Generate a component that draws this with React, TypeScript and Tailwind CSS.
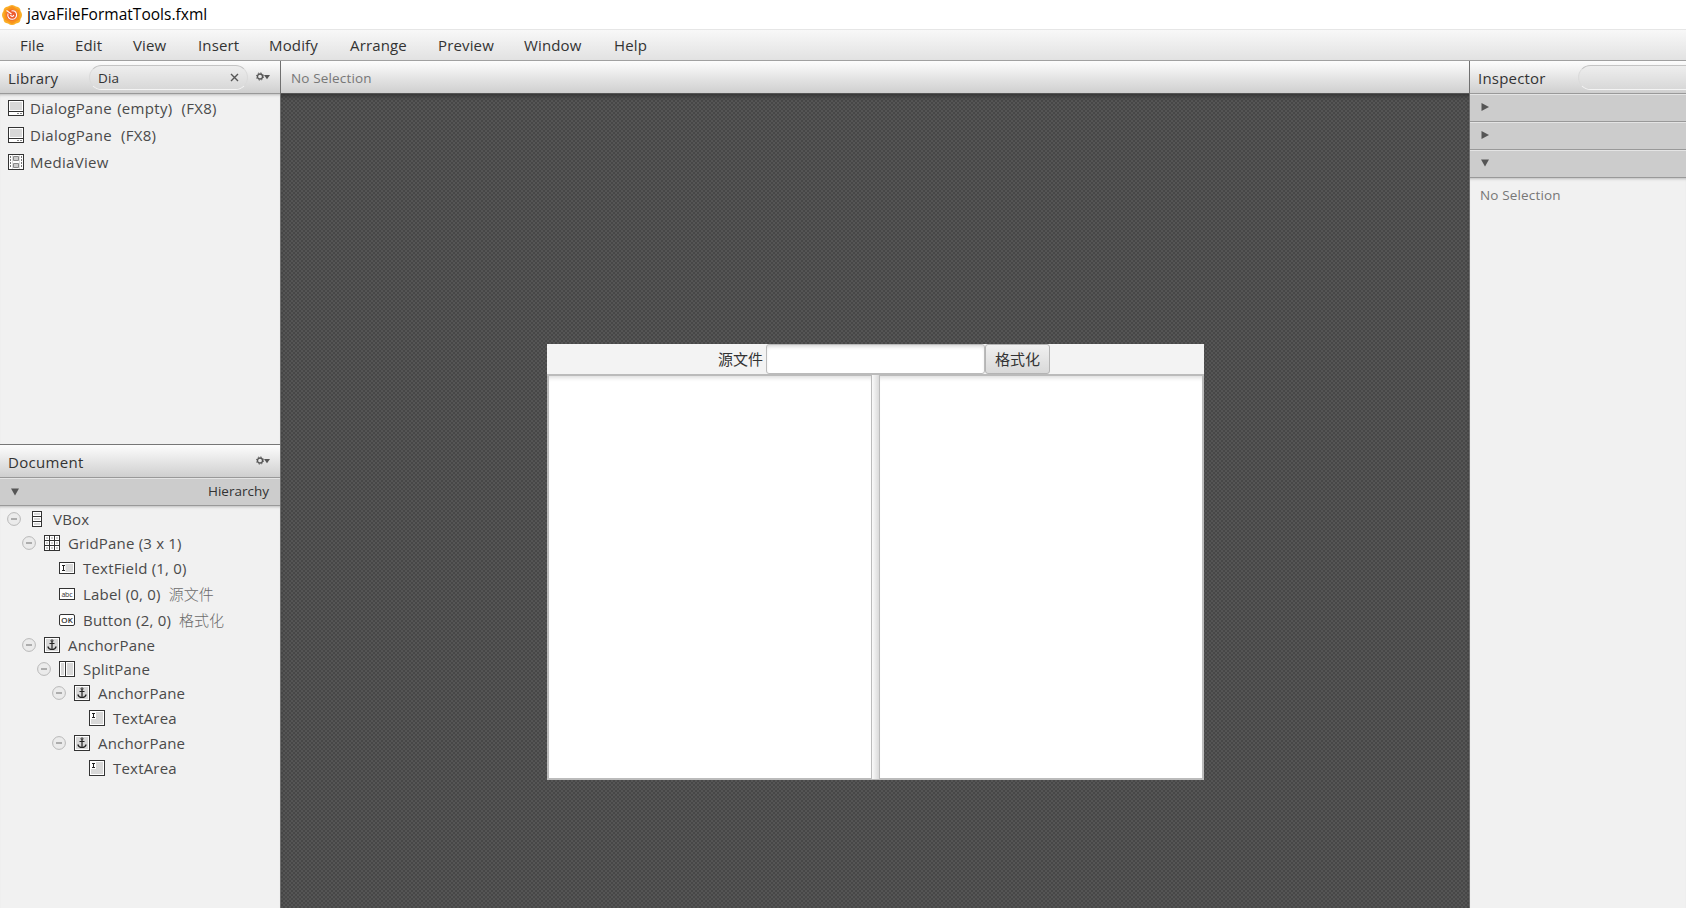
import { Fragment, type ReactNode } from "react";

type IconKind = "dialog" | "media" | "vbox" | "grid" | "field" | "label" | "button" | "anchor" | "split" | "area";

interface TreeNode {
  icon: IconKind;
  name: string;
  info?: string;
  pad: string;
  height: string;
  leaf?: boolean;
}

const menus = [
  { label: "File", width: "w-[55px]" },
  { label: "Edit", width: "w-[58px]" },
  { label: "View", width: "w-[65px]" },
  { label: "Insert", width: "w-[71px]" },
  { label: "Modify", width: "w-[81px]" },
  { label: "Arrange", width: "w-[88px]" },
  { label: "Preview", width: "w-[86px]" },
  { label: "Window", width: "w-[90px]" },
  { label: "Help", width: "w-[60px]" },
];

const library: { icon: IconKind; name: string; tag?: string }[] = [
  { icon: "dialog", name: "DialogPane (empty)", tag: "(FX8)" },
  { icon: "dialog", name: "DialogPane", tag: "(FX8)" },
  { icon: "media", name: "MediaView" },
];

const tree: TreeNode[] = [
  { icon: "vbox", name: "VBox", pad: "pl-[7px]", height: "h-6" },
  { icon: "grid", name: "GridPane (3 x 1)", pad: "pl-[22px]", height: "h-6" },
  { icon: "field", name: "TextField (1, 0)", pad: "pl-[37px]", height: "h-[26px]", leaf: true },
  { icon: "label", name: "Label (0, 0)", info: "源文件", pad: "pl-[37px]", height: "h-[26px]", leaf: true },
  { icon: "button", name: "Button (2, 0)", info: "格式化", pad: "pl-[37px]", height: "h-[26px]", leaf: true },
  { icon: "anchor", name: "AnchorPane", pad: "pl-[22px]", height: "h-6" },
  { icon: "split", name: "SplitPane", pad: "pl-[37px]", height: "h-6" },
  { icon: "anchor", name: "AnchorPane", pad: "pl-[52px]", height: "h-6" },
  { icon: "area", name: "TextArea", pad: "pl-[67px]", height: "h-[26px]", leaf: true },
  { icon: "anchor", name: "AnchorPane", pad: "pl-[52px]", height: "h-6" },
  { icon: "area", name: "TextArea", pad: "pl-[67px]", height: "h-[26px]", leaf: true },
];

const iconShapes: Record<IconKind, ReactNode> = {
  dialog: (
    <>
      <rect x="0.5" y="0.5" width="15" height="15" fill="#fff" stroke="#333" />
      <path d="M2 2h12v8H2z" fill="#d8d8d8" />
      <path d="M1 11.5h14" stroke="#333" />
      <path d="M9 13.5h2M12 13.5h2" stroke="#888" />
    </>
  ),
  media: (
    <>
      <rect x="0.5" y="0.5" width="15" height="15" fill="#fff" stroke="#333" />
      <path d="M2.5 2v12M13.5 2v12" stroke="#777" strokeDasharray="2 1" />
      <path d="M5.5 2.5h5v4h-5zM5.5 9.5h5v4h-5z" fill="#ccc" stroke="#888" />
      <path d="M4.5 1v14M11.5 1v14" stroke="#ddd" />
    </>
  ),
  vbox: (
    <>
      <rect x="3.5" y="0.5" width="9" height="15" fill="#fff" stroke="#333" />
      <path d="M5 2h6v2H5zM5 7h6v2H5zM5 12h6v2H5z" fill="#d8d8d8" />
      <path d="M4 5.5h8M4 10.5h8" stroke="#333" />
    </>
  ),
  grid: (
    <>
      <rect x="0.5" y="0.5" width="15" height="15" fill="#fff" stroke="#333" />
      <path d="M2 2h2v2H2zM7 2h2v2H7zM12 2h2v2h-2zM2 7h2v2H2zM7 7h2v2H7zM12 7h2v2h-2zM2 12h2v2H2zM7 12h2v2H7zM12 12h2v2h-2z" fill="#d0d0d0" />
      <path d="M5.5 1v14M10.5 1v14M1 5.5h14M1 10.5h14" stroke="#333" />
    </>
  ),
  field: (
    <>
      <rect x="0.5" y="2.5" width="15" height="11" fill="#fff" stroke="#333" />
      <path d="M6.5 4H14v8H6.5z" fill="#d8d8d8" />
      <path d="M3 5.5h3M3 10.5h3M4.5 5v6" stroke="#222" fill="none" />
    </>
  ),
  label: (
    <>
      <rect x="0.5" y="2.5" width="15" height="11" fill="#fff" stroke="#333" />
      <text x="2.5" y="10.7" fontSize="7" fill="#333" letterSpacing="0" textLength="11">abc</text>
    </>
  ),
  button: (
    <>
      <rect x="0.5" y="2.5" width="15" height="11" rx="1.5" fill="#fff" stroke="#333" />
      <text x="2.3" y="11" fontSize="8" fill="#222" stroke="#222" strokeWidth="0.2" letterSpacing="0" textLength="11.4">OK</text>
    </>
  ),
  anchor: (
    <>
      <rect x="0.5" y="0.5" width="15" height="15" fill="#fff" stroke="#333" />
      <path d="M2 2h12v12H2z" fill="#d8d8d8" />
      <circle cx="8" cy="3.8" r="1" fill="none" stroke="#222" />
      <path d="M8 5v7.5M5.5 6.5h5" stroke="#222" strokeWidth="1.2" />
      <path d="M3.8 9.5c.6 2 2.1 3 4.2 3s3.6-1 4.2-3" fill="none" stroke="#222" strokeWidth="1.2" />
    </>
  ),
  split: (
    <>
      <rect x="0.5" y="0.5" width="15" height="15" fill="#fff" stroke="#333" />
      <path d="M2 2h3v12H2zM8 2h6v12H8z" fill="#d8d8d8" />
      <path d="M6.5 1v14" stroke="#333" />
    </>
  ),
  area: (
    <>
      <rect x="0.5" y="0.5" width="15" height="15" fill="#fff" stroke="#333" />
      <path d="M7 2h7v12H2V9h5z" fill="#d8d8d8" />
      <path d="M3 3.5h3M3 7.5h3M4.5 3v5" stroke="#222" fill="none" />
    </>
  ),
};

const NodeIcon = ({ kind }: { kind: IconKind }) => (
  <svg width="16" height="16" viewBox="0 0 16 16" className="shrink-0">
    {iconShapes[kind]}
  </svg>
);

const GearMenu = () => (
  <svg width="14" height="10" viewBox="0 0 14 10" className="shrink-0">
    <circle cx="4" cy="4.5" r="2.5" fill="none" stroke="#555" strokeWidth="1.3" />
    <circle cx="4" cy="4.5" r="3.6" fill="none" stroke="#555" strokeDasharray="1.4 1.427" />
    <path d="M8 3h6l-3 4.2z" fill="#555" />
  </svg>
);

const Arrow = ({ open }: { open?: boolean }) => (
  <svg width="8" height="8" viewBox="0 0 8 8" className="shrink-0">
    <path d={open ? "M0 0.5h8L4 7.5z" : "M0.5 0v8L8 4z"} fill="#555" />
  </svg>
);

const AppLogo = () => (
  <svg width="20" height="20" viewBox="0 0 20 20" className="shrink-0">
    <path d="M6 1.500Q10-1.500 14 1.500Q18.500 2 18.500 6Q21.500 10 18.500 14Q18.500 18 14 18.500Q10 21.500 6 18.500Q1.500 18 1.500 14Q-1.500 10 1.500 6Q1.500 2 6 1.500z" fill="#fbae26" />
    <path d="M10 1l7.500 4.500v9L10 19l-7.500-4.500v-9z" fill="#f8921d" />
    <circle cx="10" cy="10" r="5.6" fill="#ee5a30" />
    <path d="M4.500 5.500l5 3.500M6 8.500c-1 3.500 1.500 6 4.500 5.800s4.500-3 4-5.300-2.500-4-5-3M8.500 10c.8 2 2.800 1.800 3.300 0" fill="none" stroke="#fff" strokeWidth="1.1" />
  </svg>
);

const barClass = "h-8 shrink-0 flex items-center bg-linear-to-b from-[#fdfdfd] to-[#cfcfcf]";

const App = () => {
  return (
    <div className="w-[1686px] h-[908px] flex flex-col overflow-hidden bg-[#f1f1f1] text-[#333] font-['Open_Sans','Noto_Sans_CJK_SC',sans-serif] text-[15px] tracking-[0.15px] whitespace-pre">
      <header className="h-[29px] shrink-0 bg-white flex items-center pl-[2px] gap-[5px] text-black text-[15.5px]">
        <AppLogo />
        <span className="tracking-[0.02px]">javaFileFormatTools.fxml</span>
      </header>
      <nav className="h-8 shrink-0 flex items-center pl-[20px] border-t border-t-[#e6e6e6] border-b border-b-[#a0a0a0] bg-linear-to-b from-[#f8f8f8] to-[#e2e2e2]">
        {menus.map((m) => (
          <span key={m.label} className={m.width}>{m.label}</span>
        ))}
      </nav>

      <main className="flex flex-1 min-h-0">
        <aside className="w-[281px] shrink-0 flex flex-col border-r border-[#707070]">
          <div className={`${barClass} pl-2 pr-[10px]`}>
            <span className="w-[81px] pt-0.5 tracking-[0.2px]">Library</span>
            <div className="w-[159px] h-[25px] flex items-center justify-between pl-[8px] pr-2 rounded-full border border-t-[#c4c4c4] border-x-[#dadada] border-b-[#f4f4f4] bg-linear-to-b from-[#eee] to-[#d8d8d8] text-[13.5px]">
              <span className="pt-0.5">Dia</span>
              <svg width="9" height="9" viewBox="0 0 9 9">
                <path d="M1 1l7 7M8 1L1 8" stroke="#555" strokeWidth="1.4" />
              </svg>
            </div>
            <div className="flex-1" />
            <GearMenu />
          </div>
          <section className="h-[351px] shrink-0 border-t border-[#999] shadow-[inset_0_3px_3px_-2px_#bbb] text-[#4a4a4a] tracking-[0.3px] [word-spacing:1px]">
            {library.map((item) => (
              <div key={item.name} className="h-[27px] flex items-center pl-2 gap-[6px]">
                <NodeIcon kind={item.icon} />
                <span className="pt-px">{item.name}</span>
                {item.tag && <span className="ml-[3px] pt-px">{item.tag}</span>}
              </div>
            ))}
          </section>
          <div className="h-px shrink-0 bg-[#777]" />
          <div className={`${barClass} justify-between pl-2 pr-[10px]`}>
            <span className="pt-0.5 tracking-[0.3px]">Document</span>
            <GearMenu />
          </div>
          <div className="h-[29px] shrink-0 flex items-center justify-between pl-[11px] pr-[11px] border-y border-[#999] bg-[#ccc] shadow-[inset_0_1px_0_#e4e4e4] text-[13.5px]">
            <Arrow open />
            <span className="tracking-normal">Hierarchy</span>
          </div>
          <section className="flex-1 shadow-[inset_0_3px_3px_-2px_#bbb] pt-[1px] text-[#4a4a4a] tracking-[0.2px]">
            {tree.map((node, i) => (
              <div key={i} className={`flex items-center ${node.height} ${node.pad}`}>
                <svg width="14" height="14" viewBox="0 0 14 14" className="shrink-0">
                  {!node.leaf && (
                    <>
                      <circle cx="7" cy="7" r="6.4" fill="#ebebeb" stroke="#b8b8b8" />
                      <path d="M4 7h6" stroke="#999" strokeWidth="1.5" />
                    </>
                  )}
                </svg>
                <span className="ml-2 mr-2"><NodeIcon kind={node.icon} /></span>
                <span>{node.name}</span>
                {node.info && <span className="ml-2 font-light text-[#6a6a6a] tracking-normal">{node.info}</span>}
              </div>
            ))}
          </section>
        </aside>

        <section className="flex-1 min-w-0 flex flex-col">
          <div className={`${barClass} pl-[10px] text-[#777] text-[13.5px]`}>
            <span className="pt-0.5">No Selection</span>
          </div>
          <div className="flex-1 border-t border-[#555] bg-[repeating-conic-gradient(#474747_0_25%,#555_0_50%)] bg-size-[4px_4px] shadow-[inset_0_4px_4px_-2px_#333] pt-[250px] pl-[266px]">
            <div className="w-[657px] h-[436px] flex flex-col bg-[#f3f3f3]">
              <div className="h-[30px] shrink-0 flex items-center pl-[171px] tracking-normal">
                <span className="w-[48px]">源文件</span>
                <div className="w-[219px] h-[30px] rounded-[3px] border border-[#bbb] bg-white shadow-[inset_0_3px_4px_-2px_#ccc]" />
                <button className="w-[65px] h-[30px] rounded-[3px] border border-[#b4b4b4] bg-linear-to-b from-[#f0f0f0] to-[#d9d9d9]">格式化</button>
              </div>
              <div className="flex flex-1 border border-[#bbb]">
                {[0, 1].map((n) => (
                  <Fragment key={n}>
                    {n === 1 && <div className="w-[7px] bg-linear-to-r from-[#fafafa] to-[#dadada]" />}
                    <div className={`${n === 0 ? "w-[324px]" : "flex-1"} border border-[#bbb] bg-white shadow-[inset_0_5px_4px_-3px_#ddd]`} />
                  </Fragment>
                ))}
              </div>
            </div>
          </div>
        </section>

        <aside className="w-[217px] shrink-0 flex flex-col border-l border-[#707070] overflow-hidden">
          <div className={`${barClass} pl-2`}>
            <span className="w-[100px] shrink-0 pt-0.5 tracking-[0.2px]">Inspector</span>
            <div className="w-[159px] h-[25px] shrink-0 rounded-full border border-t-[#c4c4c4] border-x-[#dadada] border-b-[#f4f4f4] bg-linear-to-b from-[#eee] to-[#d8d8d8]" />
          </div>
          {[false, false, true].map((open, i) => (
            <div key={i} className="h-7 shrink-0 flex items-center pl-[11px] pb-[2px] border-t border-[#999] bg-[#ccc] shadow-[inset_0_1px_0_#e4e4e4]">
              <Arrow open={open} />
            </div>
          ))}
          <div className="flex-1 border-t border-[#999] pt-[7px] pl-[10px] text-[#777] text-[13.5px] shadow-[inset_0_3px_3px_-2px_#bbb]">No Selection</div>
        </aside>
      </main>
    </div>
  );
};

export default App;
